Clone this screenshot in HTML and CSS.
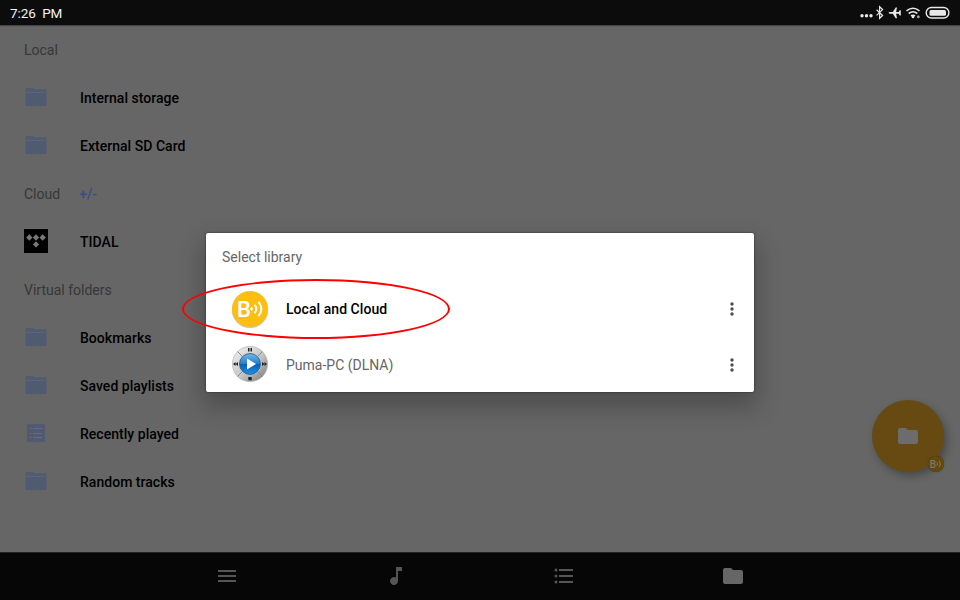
FILE: index.html
```html
<!DOCTYPE html>
<html lang="en">
<head>
    <meta charset="UTF-8">
    <meta name="viewport" content="width=device-width, initial-scale=1.0">
    <title>Select library</title>
    <link rel="stylesheet" href="styles.css">
</head>
<body>
    <!-- shared icons -->
    <svg class="sprite">
        <symbol id="folder" viewBox="0 0 24 24">
            <path d="M1.500 4q0-1 1-1h6l1.700 1.300h11.300q1 0 1 1V20q0 1-1 1h-19q-1 0-1-1z"/>
            <path d="M1.500 7.500h21" stroke="#5f6778" stroke-width=".8"/>
        </symbol>
        <symbol id="folder-solid" viewBox="0 0 24 24">
            <path d="M10 4H4c-1.100 0-2 .9-2 2v12c0 1.100.9 2 2 2h16c1.100 0 2-.9 2-2V8c0-1.100-.9-2-2-2h-8z"/>
        </symbol>
        <symbol id="more" viewBox="0 0 24 24">
            <circle cx="12" cy="7" r="1.700"/>
            <circle cx="12" cy="12" r="1.700"/>
            <circle cx="12" cy="17" r="1.700"/>
        </symbol>
    </svg>

    <header class="status-bar">
        <span class="clock">7:26&nbsp; PM</span>
        <svg class="status-icons" width="92" height="16" viewBox="0 0 92 16">
            <g fill="#e8e8e8">
                <circle cx="3" cy="10.800" r="1.700"/>
                <circle cx="7.500" cy="10.800" r="1.700"/>
                <circle cx="12" cy="10.800" r="1.700"/>
                <path d="M29.400 7.800l1.200-.9h3.200l2.900-4.500H38l-.9 4.500h2.500l1.200-1.700h1v5.200h-1l-1.200-1.700h-2.500l.9 4.500h-1.300l-2.900-4.500h-3.200z"/>
                <rect x="70.500" y="4.900" width="16.500" height="5.900" rx="1.500"/>
            </g>
            <g fill="none" stroke="#e8e8e8">
                <path d="M17.600 4.700l6 5.800-3 2.800V1.700l3 2.900-6 5.800" stroke-width="1.200"/>
                <path d="M47.500 5.800q6.500-5 13 0M49.700 8.500q4.300-3.400 8.600 0M52 11q2-1.500 4 0" stroke-width="1.600"/>
                <rect x="67.200" y="2.500" width="22.700" height="10.500" rx="5.200" stroke-width="1.400"/>
            </g>
            <circle cx="54" cy="12" r="1.300" fill="#e8e8e8"/>
            <circle cx="59.300" cy="11.800" r="1.500" fill="#999"/>
        </svg>
    </header>

    <main class="library">
        <div class="section-title">Local</div>
        <div class="row"><svg class="row-icon"><use href="#folder"/></svg><span>Internal storage</span></div>
        <div class="row"><svg class="row-icon"><use href="#folder"/></svg><span>External SD Card</span></div>

        <div class="section-title">Cloud <a class="edit-cloud">+/-</a></div>
        <div class="row">
            <svg class="row-icon" viewBox="0 0 24 24">
                <rect width="24" height="24" fill="#000"/>
                <path fill="#777" d="M5.300 5.300l3.200 3.200-3.200 3.200-3.200-3.200zM12 5.300l3.200 3.200-3.200 3.200-3.200-3.200zM18.700 5.300l3.200 3.200-3.200 3.200-3.200-3.200zM12 12.200l3.200 3.200-3.200 3.200-3.200-3.200z"/>
            </svg>
            <span>TIDAL</span>
        </div>

        <div class="section-title">Virtual folders</div>
        <div class="row"><svg class="row-icon"><use href="#folder"/></svg><span>Bookmarks</span></div>
        <div class="row"><svg class="row-icon"><use href="#folder"/></svg><span>Saved playlists</span></div>
        <div class="row">
            <svg class="row-icon" viewBox="0 0 24 24">
                <rect x="3" y="3" width="18" height="18" rx="1"/>
                <path d="M6 7.500h1.500M9 7.500h9M6 12.500h1.500M9 12.500h9M6 16.500h1.500M9 16.500h9" stroke="#666d7e"/>
            </svg>
            <span>Recently played</span>
        </div>
        <div class="row"><svg class="row-icon"><use href="#folder"/></svg><span>Random tracks</span></div>
    </main>

    <div class="fab">
        <svg width="24" height="24"><use href="#folder-solid"/></svg>
        <div class="fab-badge">
            <span>B</span>
            <svg width="6" height="8" viewBox="0 0 6 8"><path d="M1 2.300q1.200 1.700 0 3.400M3.300 1q2.300 3 0 6"/></svg>
        </div>
    </div>

    <nav class="bottom-nav">
        <svg width="24" height="24" viewBox="0 0 24 24"><path d="M3 6h18v2H3zM3 11h18v2H3zM3 16h18v2H3z"/></svg>
        <svg width="24" height="24" viewBox="0 0 24 24"><path d="M12 3v10.550A4 4 0 1 0 14 17V7h4V3z"/></svg>
        <svg width="24" height="24" viewBox="0 0 24 24">
            <path d="M7 5h14v2H7zM7 11h14v2H7zM7 17h14v2H7z"/>
            <circle cx="4" cy="6" r="1.500"/><circle cx="4" cy="12" r="1.500"/><circle cx="4" cy="18" r="1.500"/>
        </svg>
        <svg class="active" width="24" height="24"><use href="#folder-solid"/></svg>
    </nav>

    <div class="dialog">
        <div class="dialog-title">Select library</div>
        <div class="option selected">
            <div class="bubble-logo">
                <span>B</span>
                <svg width="14" height="20" viewBox="0 0 14 20">
                    <path d="M0 10l2-2.300q1.800 2.300 0 4.600z" fill="#fff" stroke="none"/>
                    <path d="M4.500 5.800q3.600 4.200 0 8.400M8.400 2.800q6 7.200 0 14.400"/>
                </svg>
            </div>
            <span class="option-name">Local and Cloud</span>
            <svg class="more"><use href="#more"/></svg>
        </div>
        <div class="option">
            <svg class="player-logo" viewBox="0 0 36 36">
                <defs>
                    <linearGradient id="ring" x1="0" y1="0" x2="1" y2="1">
                        <stop offset="0" stop-color="#f4f4f4"/>
                        <stop offset=".55" stop-color="#c4c4c4"/>
                        <stop offset="1" stop-color="#777"/>
                    </linearGradient>
                    <linearGradient id="button" x1="0" y1="0" x2="0" y2="1">
                        <stop offset="0" stop-color="#75b6e8"/>
                        <stop offset=".48" stop-color="#2880cc"/>
                        <stop offset=".52" stop-color="#0b60b4"/>
                        <stop offset="1" stop-color="#1f91df"/>
                    </linearGradient>
                </defs>
                <circle cx="18" cy="18" r="17.600" fill="url(#ring)" stroke="#aaa" stroke-width=".6"/>
                <path d="M5.500 5.500l25 25M30.500 5.500l-25 25" stroke="#888"/>
                <circle cx="18" cy="18" r="11.300" fill="#d4d4d4"/>
                <circle cx="18" cy="18" r="10.500" fill="url(#button)" stroke="#235987" stroke-width=".8"/>
                <path d="M15 12.500v11l9-5.500z" fill="#fff"/>
                <path fill="#222" d="M16 2h1.500v3.400H16zM18.500 2H20v3.400h-1.500zM16.300 31h3.400v3.200h-3.400zM1 18l2.500-2v4zM3.500 18L6 16v4zM35 18l-2.500-2v4zM32.500 18L30 16v4z"/>
            </svg>
            <span class="option-name">Puma-PC (DLNA)</span>
            <svg class="more"><use href="#more"/></svg>
        </div>
        <div class="highlight"></div>
    </div>
</body>
</html>
```
FILE: styles.css
```css
* {
    box-sizing: border-box;
}

body {
    margin: 0;
    height: 600px;
    display: flex;
    flex-direction: column;
    position: relative;
    overflow: hidden;
    background-color: #666;
    color: #000;
    font-family: Roboto, sans-serif;
    font-size: 14px;
}

svg {
    display: block;
    flex-shrink: 0;
}

.sprite {
    position: absolute;
    width: 0;
    height: 0;
}

.status-bar {
    height: 25px;
    padding: 1px 9px 0 10px;
    display: flex;
    align-items: center;
    justify-content: space-between;
    background-color: #0c0c0c;
    color: #f2f2f2;
    box-shadow: 0 1px 1px rgba(0, 0, 0, 0.35);
}

.clock {
    font-size: 13.5px;
    letter-spacing: -0.1px;
}

.library {
    flex: 1;
}

.section-title,
.row {
    height: 48px;
    padding-left: 24px;
    padding-top: 1px;
    display: flex;
    align-items: center;
}

.section-title {
    color: #373737;
}

.edit-cloud {
    margin-left: 19px;
    color: #344d88;
    font-weight: 500;
}

.row {
    font-weight: 500;
    letter-spacing: 0.03px;
}

.row span {
    margin-left: 32px;
}

.row-icon {
    width: 24px;
    height: 24px;
    margin-top: -2px;
    fill: #505a71;
}

.bottom-nav {
    height: 48px;
    padding: 0 143px 1px;
    display: flex;
    align-items: center;
    justify-content: space-around;
    background-color: #060606;
    border-top: 1px solid #222;
    fill: #555;
}

.bottom-nav .active {
    fill: #666;
}

/* Floating button over the list */
.fab {
    position: absolute;
    left: 872px;
    top: 400px;
    width: 72px;
    height: 72px;
    display: flex;
    align-items: center;
    justify-content: center;
    border-radius: 50%;
    background-color: #664a12;
    box-shadow: 3px 4px 9px rgba(0, 0, 0, 0.3);
    fill: #6c6c6c;
}

.fab-badge {
    position: absolute;
    right: 0;
    bottom: 0;
    width: 16px;
    height: 16px;
    display: flex;
    align-items: center;
    justify-content: center;
    border-radius: 50%;
    background-color: #664a0a;
    box-shadow: 0 0 1px rgba(0, 0, 0, 0.5);
    color: #777;
    font-size: 10px;
    font-weight: 500;
}

.fab-badge svg {
    fill: none;
    stroke: #777;
}

/* Library dialog */
.dialog {
    position: absolute;
    left: 206px;
    top: 233px;
    width: 548px;
    height: 159px;
    background-color: #fff;
    border-radius: 2px;
    box-shadow: 0 0 2px rgba(0, 0, 0, 0.7), 0 12px 24px 4px rgba(0, 0, 0, 0.24);
}

.dialog-title {
    height: 48px;
    padding-left: 16px;
    line-height: 49px;
    color: #666;
}

.option {
    height: 56px;
    padding: 0 10px 0 26px;
    display: flex;
    align-items: center;
    color: #666;
}

.option.selected {
    color: #000;
    font-weight: 500;
    letter-spacing: 0.05px;
}

.option-name {
    flex: 1;
    margin-left: 18px;
}

.more {
    width: 24px;
    height: 24px;
    margin-top: -1px;
    fill: #4d4d4d;
}

.bubble-logo {
    width: 36px;
    height: 36px;
    padding-left: 5px;
    display: flex;
    align-items: center;
    border-radius: 50%;
    background-color: #fdbe14;
    box-shadow: 0 1px 1px rgba(0, 0, 0, 0.25);
    color: #fff;
    font-size: 22px;
    font-weight: 500;
}

.bubble-logo svg {
    margin-left: -1px;
    fill: none;
    stroke: #fff;
    stroke-width: 2;
}

.player-logo {
    width: 36px;
    height: 36px;
    margin-top: -2px;
}

.highlight {
    position: absolute;
    left: -24px;
    top: 46px;
    width: 268px;
    height: 60px;
    border: 2px solid #f00;
    border-radius: 50%;
}
```
